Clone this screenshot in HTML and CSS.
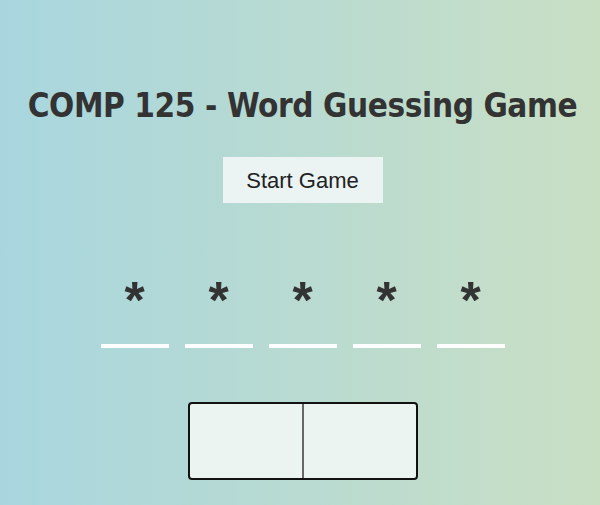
FILE: index.html
```html
<!DOCTYPE html>
<html>
<head>
<meta charset="utf-8">
<link rel="stylesheet" href="styles.css">
</head>
<body>
<main class="page">
  <h1 class="title">COMP 125 - Word Guessing Game</h1>
  <button class="start">Start Game</button>
  <div class="word">
    <div class="slot"><span class="char">*</span><span class="line"></span></div>
    <div class="slot"><span class="char">*</span><span class="line"></span></div>
    <div class="slot"><span class="char">*</span><span class="line"></span></div>
    <div class="slot"><span class="char">*</span><span class="line"></span></div>
    <div class="slot"><span class="char">*</span><span class="line"></span></div>
  </div>
  <div class="panel">
    <div class="cell"></div>
    <div class="cell"></div>
  </div>
</main>
</body>
</html>
```
FILE: styles.css
```css
html, body {
  margin: 0;
  padding: 0;
  height: 100%;
}
body {
  background: linear-gradient(to right, #a8d6df, #c9dfc4);
  font-family: "DejaVu Sans", sans-serif;
  color: #333;
}
.page {
  display: flex;
  flex-direction: column;
  align-items: center;
  padding-top: 86px;
  padding-left: 5px;
}
.title {
  margin: 0;
  font-family: "DejaVu Sans Condensed", "DejaVu Sans", sans-serif;
  font-stretch: condensed;
  font-size: 33px;
  font-weight: bold;
  letter-spacing: -0.4px;
  line-height: 40px;
  color: #333;
}
.start {
  margin-top: 31px;
  width: 160px;
  height: 46px;
  border: none;
  background: #ebf4f2;
  font-family: "Liberation Sans", Arial, sans-serif;
  font-size: 22px;
  color: #222;
  padding: 2px 0 0;
}
.word {
  margin-top: 72px;
  display: flex;
  gap: 16px;
}
.slot {
  width: 68px;
  display: flex;
  flex-direction: column;
  align-items: center;
}
.char {
  font-family: "Liberation Sans", Arial, sans-serif;
  font-size: 52px;
  font-weight: bold;
  line-height: 50px;
  height: 50px;
  color: #333;
}
.line {
  margin-top: 19px;
  width: 68px;
  height: 4px;
  background: #fff;
}
.panel {
  margin-top: 54px;
  width: 226px;
  height: 74px;
  border: 2px solid #111;
  border-radius: 4px;
  background: #ebf4f1;
  display: flex;
}
.cell {
  flex: 1;
}
.cell + .cell {
  border-left: 2px solid #666;
}
```
